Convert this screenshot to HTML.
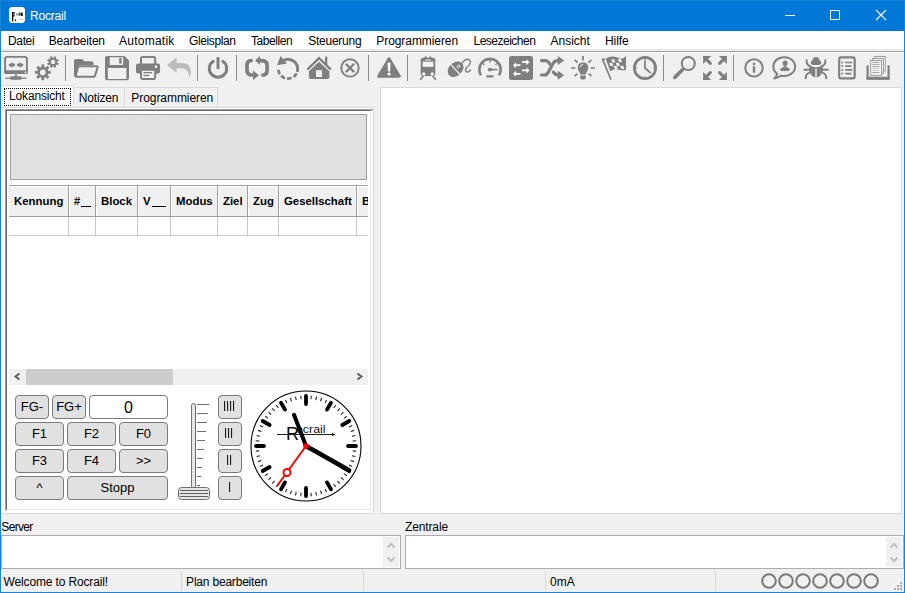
<!DOCTYPE html>
<html><head><meta charset="utf-8">
<style>
*{margin:0;padding:0;box-sizing:border-box}
html,body{width:905px;height:593px;overflow:hidden;background:#f0f0f0;font-family:"Liberation Sans",sans-serif;font-size:12px;color:#000}
.a{position:absolute}
.t{position:absolute;white-space:nowrap;line-height:14px}
#title{left:0;top:0;width:905px;height:31px;background:#0078d7}
#menu{left:1px;top:31px;width:903px;height:18px;background:#fff}
.btn{position:absolute;background:#e1e1e1;border:1px solid #7a7a7a;border-radius:4px;text-align:center;line-height:22px;font-size:13px}
</style></head><body>
<!-- window frame -->
<div class="a" style="left:0;top:0;width:905px;height:593px;background:#1883d7"></div>
<div class="a" style="left:1px;top:1px;width:903px;height:30px;background:#0078d7"></div>
<div class="a" style="left:1px;top:31px;width:903px;height:561px;background:#f0f0f0"></div>
<!-- title -->
<svg class="a" style="left:9px;top:7px" width="16" height="16"><path d="M2 0 H14 L16 2 V14 L14 16 H2 L0 14 V2 Z" fill="#fff"/>
<rect x="3" y="5" width="1.3" height="9.5" fill="#111"/><rect x="3" y="5" width="2.6" height="1.2" fill="#111"/><rect x="4.6" y="5.8" width="1" height="2.8" fill="#333"/><rect x="3.5" y="8.2" width="2" height="1.4" fill="#111"/><rect x="6" y="12.2" width="1" height="2" fill="#222"/>
<rect x="7" y="6.5" width="1.3" height="1.3" fill="#555"/><rect x="8.2" y="8.2" width="1" height="1" fill="#666"/><rect x="9.5" y="5.6" width="2" height="3" fill="#444"/><rect x="11.8" y="5.6" width="2" height="3.4" fill="#111"/><rect x="10" y="11.8" width="4.6" height="0.8" fill="#bbb"/></svg>
<div class="t" style="left:30px;top:9px;color:#fff;letter-spacing:-0.2px">Rocrail</div>
<!-- menu -->
<div class="a" style="left:1px;top:31px;width:903px;height:18px;background:#fff"></div>
<div class="a" style="left:1px;top:49px;width:903px;height:1px;background:#e3e3e3"></div>
<div class="a" style="left:1px;top:51px;width:903px;height:1px;background:#a0a0a0"></div>
<div class="a" style="left:1px;top:52px;width:903px;height:1px;background:#fff"></div>
<div class="t" style="left:8.0px;top:34px;letter-spacing:-0.35px">Datei</div>
<div class="t" style="left:48.8px;top:34px;letter-spacing:-0.20px">Bearbeiten</div>
<div class="t" style="left:119.0px;top:34px;letter-spacing:0.25px">Automatik</div>
<div class="t" style="left:189.0px;top:34px;letter-spacing:-0.38px">Gleisplan</div>
<div class="t" style="left:251.0px;top:34px;letter-spacing:-0.43px">Tabellen</div>
<div class="t" style="left:308.3px;top:34px;letter-spacing:-0.26px">Steuerung</div>
<div class="t" style="left:376.3px;top:34px;letter-spacing:-0.07px">Programmieren</div>
<div class="t" style="left:473.5px;top:34px;letter-spacing:-0.50px">Lesezeichen</div>
<div class="t" style="left:550.6px;top:34px;letter-spacing:-0.03px">Ansicht</div>
<div class="t" style="left:605.0px;top:34px;letter-spacing:-0.07px">Hilfe</div>

<svg class="a" style="left:0;top:52px" width="905" height="34" viewBox="0 52 905 34">
<rect x="5.1" y="56.9" width="21.8" height="15" rx="2" fill="none" stroke="#7f7f7f" stroke-width="1.9"/>
<rect x="4.2" y="70.3" width="23.6" height="3.6" rx="1.2" fill="#7f7f7f"/>
<circle cx="25.4" cy="72.4" r="0.8" fill="#fff"/>
<path d="M8.2 64.9 L12.3 61.9 V63.6 H15 V66.2 H12.3 V67.9 Z" fill="#7f7f7f"/>
<path d="M23.9 64.9 L19.8 61.9 V63.6 H17.1 V66.2 H19.8 V67.9 Z" fill="#7f7f7f"/>
<rect x="15.2" y="73.5" width="1.6" height="3" fill="#7f7f7f"/>
<rect x="5" y="77.4" width="21.8" height="1.4" rx="0.7" fill="#7f7f7f"/>
<rect x="10.1" y="76.3" width="11.6" height="3.5" rx="1.6" fill="#7f7f7f"/>
<circle cx="53" cy="62" r="3.2" fill="none" stroke="#7f7f7f" stroke-width="2.0"/><rect x="51.85" y="56.2" width="2.3" height="2.5999999999999996" fill="#7f7f7f" transform="rotate(22.5 53 62)"/><rect x="51.85" y="56.2" width="2.3" height="2.5999999999999996" fill="#7f7f7f" transform="rotate(67.5 53 62)"/><rect x="51.85" y="56.2" width="2.3" height="2.5999999999999996" fill="#7f7f7f" transform="rotate(112.5 53 62)"/><rect x="51.85" y="56.2" width="2.3" height="2.5999999999999996" fill="#7f7f7f" transform="rotate(157.5 53 62)"/><rect x="51.85" y="56.2" width="2.3" height="2.5999999999999996" fill="#7f7f7f" transform="rotate(202.5 53 62)"/><rect x="51.85" y="56.2" width="2.3" height="2.5999999999999996" fill="#7f7f7f" transform="rotate(247.5 53 62)"/><rect x="51.85" y="56.2" width="2.3" height="2.5999999999999996" fill="#7f7f7f" transform="rotate(292.5 53 62)"/><rect x="51.85" y="56.2" width="2.3" height="2.5999999999999996" fill="#7f7f7f" transform="rotate(337.5 53 62)"/>
<circle cx="42.8" cy="72.3" r="4.25" fill="none" stroke="#7f7f7f" stroke-width="2.6999999999999997"/><rect x="41.4" y="64.39999999999999" width="2.8" height="3.3000000000000007" fill="#7f7f7f" transform="rotate(0.0 42.8 72.3)"/><rect x="41.4" y="64.39999999999999" width="2.8" height="3.3000000000000007" fill="#7f7f7f" transform="rotate(45.0 42.8 72.3)"/><rect x="41.4" y="64.39999999999999" width="2.8" height="3.3000000000000007" fill="#7f7f7f" transform="rotate(90.0 42.8 72.3)"/><rect x="41.4" y="64.39999999999999" width="2.8" height="3.3000000000000007" fill="#7f7f7f" transform="rotate(135.0 42.8 72.3)"/><rect x="41.4" y="64.39999999999999" width="2.8" height="3.3000000000000007" fill="#7f7f7f" transform="rotate(180.0 42.8 72.3)"/><rect x="41.4" y="64.39999999999999" width="2.8" height="3.3000000000000007" fill="#7f7f7f" transform="rotate(225.0 42.8 72.3)"/><rect x="41.4" y="64.39999999999999" width="2.8" height="3.3000000000000007" fill="#7f7f7f" transform="rotate(270.0 42.8 72.3)"/><rect x="41.4" y="64.39999999999999" width="2.8" height="3.3000000000000007" fill="#7f7f7f" transform="rotate(315.0 42.8 72.3)"/>
<rect x="65.0" y="55" width="1" height="26" fill="#8c8c8c"/>
<rect x="197.0" y="55" width="1" height="26" fill="#8c8c8c"/>
<rect x="236.0" y="55" width="1" height="26" fill="#8c8c8c"/>
<rect x="368.0" y="55" width="1" height="26" fill="#8c8c8c"/>
<rect x="407.0" y="55" width="1" height="26" fill="#8c8c8c"/>
<rect x="663.0" y="55" width="1" height="26" fill="#8c8c8c"/>
<rect x="733.0" y="55" width="1" height="26" fill="#8c8c8c"/>
<path d="M74 61 Q74 59 76 59 H81.5 Q83 59 83.8 60.5 L84.3 61.3 H91.5 Q93.5 61.3 93.5 63.3 V65 H80 Q78.3 65 77.8 66.5 L75.8 75.5 H76.5 V77 H76 Q74 77 74 75 Z" fill="#7f7f7f"/>
<path d="M79.4 66.2 H96.6 Q98 66.2 97.6 67.6 L95 75.6 Q94.6 76.8 93.3 76.8 H76.3 Q75.2 76.8 75.6 75.6 L78 67.4 Q78.3 66.2 79.4 66.2 Z" fill="none" stroke="#7f7f7f" stroke-width="2"/>
<path d="M107 56 H124.5 L129 60.5 V78 Q129 80.2 126.8 80.2 H107.2 Q105 80.2 105 78 V58.2 Q105 56 107 56 Z M109.7 57.2 V65 H123.2 V57.2 Z M107.8 67.9 V79 H126.4 V67.9 Z" fill="#7f7f7f" fill-rule="evenodd"/>
<rect x="119.2" y="57.9" width="2.4" height="5.7" fill="#7f7f7f"/>
<rect x="141" y="57" width="14.2" height="8" rx="1.6" fill="none" stroke="#7f7f7f" stroke-width="2"/>
<rect x="136" y="63.6" width="24" height="10" rx="2" fill="#7f7f7f"/>
<circle cx="156" cy="66.8" r="1.2" fill="#fff"/>
<rect x="141" y="69.8" width="14.2" height="9.2" rx="1.4" fill="#f0f0f0" stroke="#7f7f7f" stroke-width="2"/>
<rect x="143.5" y="72" width="8.5" height="1.3" fill="#7f7f7f"/>
<rect x="143.5" y="74.8" width="5.5" height="1.3" fill="#7f7f7f"/>
<path d="M166.9 65.2 L176.6 57.4 V63.1 H182 Q190.9 63.3 190.9 72 Q190.9 75 189.5 77.6 Q188.8 68.3 181 68.2 H176.6 V72.8 Z" fill="#bcbcbc"/>
<path d="M213.2 61.3 A8.7 8.7 0 1 0 222.8 61.3" fill="none" stroke="#7f7f7f" stroke-width="3" stroke-linecap="round"/>
<line x1="218" y1="58.2" x2="218" y2="67.8" stroke="#7f7f7f" stroke-width="3" stroke-linecap="round"/>
<path d="M251.2 60.6 Q247 60.6 247 65.6 V70 Q247 75 252 75 H254" fill="none" stroke="#7f7f7f" stroke-width="3.7" stroke-linecap="round"/>
<path d="M262.8 75 Q267.1 75 267.1 70 V65.6 Q267.1 60.6 262.1 60.6 H259" fill="none" stroke="#7f7f7f" stroke-width="3.7" stroke-linecap="round"/>
<path d="M255.2 60.4 L259.9 55.8 V65.1 Z" fill="#7f7f7f"/>
<path d="M258.9 75.2 L253 70.4 V80.2 Z" fill="#7f7f7f"/>
<path d="M282.91 60.86 A9.6 9.6 0 0 1 297.45 70.67" fill="none" stroke="#7f7f7f" stroke-width="2.9" stroke-linecap="round"/>
<path d="M295.96 74.37 A9.6 9.6 0 0 1 294.42 76.13" fill="none" stroke="#7f7f7f" stroke-width="2.8" stroke-linecap="round"/>
<path d="M290.48 78.27 A9.6 9.6 0 0 1 288.17 78.60" fill="none" stroke="#7f7f7f" stroke-width="2.8" stroke-linecap="round"/>
<path d="M283.94 77.70 A9.6 9.6 0 0 1 281.96 76.46" fill="none" stroke="#7f7f7f" stroke-width="2.8" stroke-linecap="round"/>
<path d="M279.30 73.06 A9.6 9.6 0 0 1 278.58 70.83" fill="none" stroke="#7f7f7f" stroke-width="2.8" stroke-linecap="round"/>
<path d="M280.6 56 L286.9 63.4 L277 65.2 Z" fill="#7f7f7f"/>
<path d="M308 68.9 L319 58.2 L330.2 68.9" fill="none" stroke="#7f7f7f" stroke-width="2.3" stroke-linecap="round"/>
<rect x="325" y="56.6" width="2.3" height="8" rx="0.5" fill="#7f7f7f"/>
<path d="M319 61.8 L329.4 71.2 V77.3 Q329.4 79 327.7 79 H310.6 Q308.9 79 308.9 77.3 V71.2 Z M316 70.2 V77.1 H322 V70.2 Z" fill="#7f7f7f" fill-rule="evenodd"/>
<circle cx="350" cy="67.9" r="8.7" fill="none" stroke="#7f7f7f" stroke-width="1.9"/>
<path d="M345.8 63.7 L354.2 72.1 M354.2 63.7 L345.8 72.1" stroke="#7f7f7f" stroke-width="2.3"/>
<path d="M389 57.2 Q389.8 57.2 390.4 58.2 L400.6 75.6 Q401.6 77.8 399.2 77.8 H378.8 Q376.4 77.8 377.4 75.6 L387.6 58.2 Q388.2 57.2 389 57.2 Z" fill="#7f7f7f"/>
<path d="M387.5 63.4 Q387.5 62.4 389 62.4 Q390.5 62.4 390.5 63.4 L390 71.6 H388 Z" fill="#fff"/>
<circle cx="389" cy="74" r="1.6" fill="#fff"/>
<path d="M423 57.7 H433 Q435.3 57.7 435.3 60 V74 Q435.3 76 433.3 76 H422.7 Q420.7 76 420.7 74 V60 Q420.7 57.7 423 57.7 Z" fill="#7f7f7f"/>
<path d="M424 58.2 L425.6 55.8 L427.2 58.2 Z M428.6 58.2 L430.2 55.8 L431.8 58.2 Z" fill="#7f7f7f"/>
<rect x="422.6" y="61.7" width="10.8" height="5.1" fill="#f4f4f4"/>
<rect x="425" y="59.4" width="6" height="1.3" rx="0.6" fill="#dcdcdc"/>
<circle cx="423.8" cy="73.9" r="1.6" fill="#fff"/><circle cx="432.2" cy="73.9" r="1.6" fill="#fff"/>
<path d="M423 76.4 L420.6 79.3 M433.1 76.4 L435.5 79.3" stroke="#7f7f7f" stroke-width="1.6" stroke-linecap="round"/>
<g transform="rotate(-43 455.6 69.2)"><ellipse cx="455.6" cy="69.2" rx="9" ry="6.6" fill="#7f7f7f"/><line x1="455.2" y1="62.4" x2="455.2" y2="76" stroke="#fff" stroke-width="1.1"/><ellipse cx="459.6" cy="69.2" rx="1.5" ry="1.1" fill="none" stroke="#fff" stroke-width="0.9"/></g>
<path d="M462.6 62.4 Q464.5 59.4 467.3 59.2 Q470.6 59.4 470.3 62.6 Q469.8 64.8 467 67.3 Q464.6 69.6 466 71.6 Q467.6 73.2 470.6 70" fill="none" stroke="#7f7f7f" stroke-width="1.4" stroke-linecap="round"/>
<path d="M481 75.3 A10.7 10.7 0 1 1 499 75.3" fill="none" stroke="#7f7f7f" stroke-width="2.7"/>
<path d="M490 60 V62.6 M483 63.6 L484.6 64.8 M497 63.6 L495.4 64.8" stroke="#7f7f7f" stroke-width="1.4"/>
<circle cx="489.8" cy="69.6" r="1.9" fill="#7f7f7f"/>
<path d="M490 68.6 L497.8 69 V70.2 L490 70.6 Z" fill="#7f7f7f"/>
<rect x="486.2" y="75.3" width="7.5" height="2.3" rx="1.1" fill="#7f7f7f"/>
<rect x="509" y="56" width="24" height="24" rx="2.5" fill="#7f7f7f"/>
<path d="M522 61.300000000000004 H526.5 V59.2 L529.5 62.2 L526.5 65.2 V63.1 H522 Z" fill="#fff"/>
<path d="M520.5 64.3 H516 V62.2 L513 65.2 L516 68.2 V66.10000000000001 H520.5 Z" fill="#fff"/>
<path d="M522 69.5 H526.5 V67.4 L529.5 70.4 L526.5 73.4 V71.30000000000001 H522 Z" fill="#fff"/>
<path d="M520.5 72.89999999999999 H516 V70.8 L513 73.8 L516 76.8 V74.7 H520.5 Z" fill="#fff"/>
<path d="M541.5 60.6 H545.5 Q547.6 60.6 549 62.8 L549.8 64" fill="none" stroke="#7f7f7f" stroke-width="3.2" stroke-linecap="round"/>
<path d="M541.5 75 H544.5 Q546.6 75 548 72.6 L553.2 63.2 Q554.8 60.6 557.5 60.6 H559" fill="none" stroke="#7f7f7f" stroke-width="3.2" stroke-linecap="round"/>
<path d="M553.4 72.2 Q555.2 75.1 558 75.1 H559" fill="none" stroke="#7f7f7f" stroke-width="3.2" stroke-linecap="round"/>
<path d="M557.8 56 L564.2 60.5 L557.8 65 Z" fill="#7f7f7f"/>
<path d="M557.8 70.8 L564.2 75.2 L557.8 79.8 Z" fill="#7f7f7f"/>
<path d="M583 56.1 V60.4 M571.1 68 H575.3 M590.7 68 H594.9 M574.6 59.8 L577.6 62.6 M591.4 59.8 L588.4 62.6 M574.6 76.2 L577.4 73.6 M591.4 76.2 L588.6 73.6" stroke="#7f7f7f" stroke-width="1.7"/>
<path d="M583 62.6 Q588.2 62.6 588.2 67.8 Q588.2 70.4 586.4 72.4 Q585.8 73.2 585.8 74.6 H580.2 Q580.2 73.2 579.6 72.4 Q577.8 70.4 577.8 67.8 Q577.8 62.6 583 62.6 Z" fill="#7f7f7f"/>
<path d="M580.2 75.6 H585.8 V77.4 Q585.8 79.4 583 79.4 Q580.2 79.4 580.2 77.4 Z" fill="#7f7f7f"/>
<path d="M580.4 66.8 Q580.6 64.8 582.8 64.3" fill="none" stroke="#fff" stroke-width="0.9" stroke-linecap="round"/>
<path d="M602.5 59.2 L610.7 79" stroke="#7f7f7f" stroke-width="1.7" stroke-linecap="round"/>
<rect x="602" y="58.6" width="3" height="1.4" fill="#7f7f7f"/>
<path d="M605.6 58.8 Q609 56.4 613 56.6 Q617 57 620 58.4 Q623 59.4 626 56 V69.8 Q623.5 70.8 620 70 Q617 69.2 614 69.4 Q611.5 69.8 610.4 71.4 Z" fill="#7f7f7f"/>
<path d="M611.30 59.30 h3 l1.1 3.2 h-3 Z" fill="#f0f0f0"/>
<path d="M617.90 59.00 h3 l1.1 3.2 h-3 Z" fill="#f0f0f0"/>
<path d="M609.20 62.70 h3 l1.1 3.2 h-3 Z" fill="#f0f0f0"/>
<path d="M615.80 62.70 h3 l1.1 3.2 h-3 Z" fill="#f0f0f0"/>
<path d="M613.70 66.10 h3 l1.1 3.2 h-3 Z" fill="#f0f0f0"/>
<path d="M620.30 65.80 h3 l1.1 3.2 h-3 Z" fill="#f0f0f0"/>
<circle cx="645" cy="68" r="10.6" fill="none" stroke="#7f7f7f" stroke-width="2.7"/>
<path d="M645 60.8 V68 L650.2 72.6" fill="none" stroke="#7f7f7f" stroke-width="1.8" stroke-linecap="round" stroke-linejoin="round"/>
<path d="M645 59 V60 M654 68 H653 M645 77 V76 M636 68 H637" stroke="#7f7f7f" stroke-width="1"/>
<circle cx="688.3" cy="63.5" r="6.5" fill="none" stroke="#7f7f7f" stroke-width="2"/>
<line x1="682.5" y1="69.8" x2="674.8" y2="77.4" stroke="#7f7f7f" stroke-width="3.6" stroke-linecap="round"/>
<path d="M703.1 56.1 H711.1 L703.1 64.1 Z" fill="#7f7f7f"/><line x1="705.1" y1="58.1" x2="710.4" y2="63.4" stroke="#7f7f7f" stroke-width="3" stroke-linecap="round"/>
<path d="M726.9 56.1 H718.9 L726.9 64.1 Z" fill="#7f7f7f"/><line x1="724.9" y1="58.1" x2="719.6" y2="63.4" stroke="#7f7f7f" stroke-width="3" stroke-linecap="round"/>
<path d="M703.1 79.9 H711.1 L703.1 71.9 Z" fill="#7f7f7f"/><line x1="705.1" y1="77.9" x2="710.4" y2="72.60000000000001" stroke="#7f7f7f" stroke-width="3" stroke-linecap="round"/>
<path d="M726.9 79.9 H718.9 L726.9 71.9 Z" fill="#7f7f7f"/><line x1="724.9" y1="77.9" x2="719.6" y2="72.60000000000001" stroke="#7f7f7f" stroke-width="3" stroke-linecap="round"/>
<circle cx="754" cy="67.9" r="8.7" fill="none" stroke="#7f7f7f" stroke-width="2"/>
<circle cx="754" cy="63.9" r="1.3" fill="#7f7f7f"/><rect x="752.8" y="66.2" width="2.4" height="6.6" fill="#7f7f7f"/>
<path d="M777.2 73.8 A10.9 9.4 0 1 1 781 75.6 Q778 77.6 774.2 78.6 Q776.4 76.6 777.2 73.8 Z" fill="none" stroke="#7f7f7f" stroke-width="2" stroke-linejoin="round"/>
<ellipse cx="785.1" cy="63.3" rx="2.5" ry="2.7" fill="#7f7f7f"/><path d="M783.6 66.2 H786.6 L787 67.4 Q789.9 68 789.9 69.6 Q789.9 71 787.5 71 H782.5 Q780.1 71 780.1 69.6 Q780.1 68 783 67.4 Z" fill="#7f7f7f"/>
<path d="M816 57 Q818.8 57 819.5 60 Q821.3 61.2 821.3 63.2 Q821.3 65.1 816 65.1 Q810.7 65.1 810.7 63.2 Q810.7 61.2 812.5 60 Q813.2 57 816 57 Z" fill="#7f7f7f"/>
<path d="M809.2 65.6 Q816 69 822.8 65.6 Q823.3 72.5 820.2 75.5 Q818.4 77.3 816 77.9 Q813.6 77.3 811.8 75.5 Q808.7 72.5 809.2 65.6 Z" fill="#7f7f7f"/>
<line x1="816" y1="68.6" x2="816" y2="78" stroke="#f0f0f0" stroke-width="1.4"/>
<path d="M806.6 60.3 Q806.4 65.4 810.6 66.4 M825.4 60.3 Q825.6 65.4 821.4 66.4 M804.3 69.8 H810 M827.9 69.8 H822 M805.6 78.4 Q805.8 73.6 810.2 72.4 M826.4 78.4 Q826.2 73.6 821.8 72.4" fill="none" stroke="#7f7f7f" stroke-width="1.9" stroke-linecap="round"/>
<rect x="839.2" y="57.4" width="15.5" height="21" rx="1.8" fill="none" stroke="#7f7f7f" stroke-width="2.2"/>
<circle cx="842.4" cy="62.5" r="1" fill="#7f7f7f"/><rect x="845.1" y="61.7" width="7.2999999999999545" height="1.6" rx="0.6" fill="#7f7f7f"/>
<circle cx="842.4" cy="66.1" r="1" fill="#7f7f7f"/><rect x="845.1" y="65.3" width="6.2999999999999545" height="1.6" rx="0.6" fill="#7f7f7f"/>
<circle cx="842.4" cy="69.9" r="1" fill="#7f7f7f"/><rect x="845.1" y="69.10000000000001" width="7.2999999999999545" height="1.6" rx="0.6" fill="#7f7f7f"/>
<circle cx="842.4" cy="73.6" r="1" fill="#7f7f7f"/><rect x="845.1" y="72.8" width="6.2999999999999545" height="1.6" rx="0.6" fill="#7f7f7f"/>
<path d="M867.6 66.3 V78.4 H888.6 V66.3" fill="none" stroke="#7f7f7f" stroke-width="2.2" stroke-linecap="round"/>
<rect x="866.5" y="76.8" width="23.2" height="3" rx="0.8" fill="#7f7f7f"/>
<rect x="874.6999999999999" y="56.4" width="10.500000000000068" height="14.600000000000005" fill="#f7f7f7" stroke="#8f8f8f" stroke-width="0.9"/>
<rect x="872.6999999999999" y="58.5" width="10.7" height="14.599999999999998" fill="#f7f7f7" stroke="#8f8f8f" stroke-width="0.9"/>
<rect x="870.6999999999999" y="60.5" width="10.800000000000022" height="14.8" fill="#f7f7f7" stroke="#8f8f8f" stroke-width="0.9"/>
<rect x="872.2" y="61.949999999999996" width="7.4" height="0.9" fill="#9a9a9a"/>
<rect x="872.2" y="63.95" width="7.4" height="0.9" fill="#9a9a9a"/>
<rect x="872.2" y="66.05" width="7.4" height="0.9" fill="#9a9a9a"/>
<rect x="872.2" y="67.95" width="7.4" height="0.9" fill="#c4c4c4"/>
<rect x="872.2" y="70.14999999999999" width="7.4" height="0.9" fill="#c4c4c4"/>
<rect x="872.2" y="72.14999999999999" width="7.4" height="0.9" fill="#9a9a9a"/>
</svg>

<!-- right white panel -->
<div class="a" style="left:380px;top:87px;width:522px;height:427px;background:#fff;border:1px solid #d9d9d9"></div>

<!-- tabs -->
<div class="a" style="left:1px;top:85px;width:73px;height:23px;background:#fff;border:1px solid #d9d9d9;border-left-color:#f4f4f4;border-bottom:none"></div>
<div class="a" style="left:4px;top:88px;width:67px;height:18px;border:1px dotted #000"></div>
<div class="t" style="left:9.1px;top:89px;letter-spacing:-0.17px">Lokansicht</div>
<div class="a" style="left:73px;top:87px;width:52px;height:20px;background:#f0f0f0;border:1px solid #d9d9d9;border-bottom:none"></div>
<div class="t" style="left:78.8px;top:91px;letter-spacing:-0.18px">Notizen</div>
<div class="a" style="left:125px;top:87px;width:93px;height:20px;background:#f0f0f0;border:1px solid #d9d9d9;border-bottom:none;border-left:none"></div>
<div class="t" style="left:131.3px;top:91px;letter-spacing:-0.06px">Programmieren</div>

<!-- notebook page -->
<div class="a" style="left:1px;top:107px;width:373px;height:407px;background:#fff;border:1px solid #d9d9d9;border-left-color:#f8f8f8"></div>

<!-- notebook page inner 3D panel -->
<div class="a" style="left:5px;top:109px;width:368px;height:402px;border-top:2px solid #a0a0a0;border-left:2px solid #a0a0a0;border-right:1px solid #fff;border-bottom:1px solid #fff"></div>
<div class="a" style="left:6px;top:110px;width:365px;height:400px;border-top:1px solid #696969;border-left:1px solid #696969;border-right:1px solid #e3e3e3;border-bottom:1px solid #e3e3e3;background:#fff"></div>
<!-- gray image box -->
<div class="a" style="left:10px;top:114px;width:357px;height:66px;background:#e0e0e0;border:1px solid #a0a0a0;border-right-color:#a0a0a0"></div>
<!-- table -->
<div class="a" style="left:9px;top:185px;width:359px;height:51px;overflow:hidden">
<div class="a" style="left:0;top:0;width:359px;height:1px;background:#a0a0a0"></div>
<div class="a" style="left:0;top:1px;width:359px;height:30px;background:#f0f0f0;border-top:1px solid #fff"></div>
<div class="a" style="left:0;top:31px;width:359px;height:1px;background:#a0a0a0"></div>
<div class="a" style="left:0;top:50px;width:359px;height:1px;background:#c8c8c8"></div>
<div class="t" style="left:5px;top:9px;font-weight:bold;font-size:11.4px">Kennung</div>
<div class="a" style="left:59px;top:1px;width:1px;height:30px;background:#a0a0a0"></div>
<div class="a" style="left:60px;top:1px;width:1px;height:30px;background:#fff"></div>
<div class="a" style="left:59px;top:32px;width:1px;height:18px;background:#c8c8c8"></div>
<div class="t" style="left:65px;top:9px;font-weight:bold;font-size:11px">#</div><div class="a" style="left:72px;top:21px;width:10px;height:1.3px;background:#000"></div>
<div class="a" style="left:86px;top:1px;width:1px;height:30px;background:#a0a0a0"></div>
<div class="a" style="left:87px;top:1px;width:1px;height:30px;background:#fff"></div>
<div class="a" style="left:86px;top:32px;width:1px;height:18px;background:#c8c8c8"></div>
<div class="t" style="left:92px;top:9px;font-weight:bold;font-size:11.4px">Block</div>
<div class="a" style="left:128px;top:1px;width:1px;height:30px;background:#a0a0a0"></div>
<div class="a" style="left:129px;top:1px;width:1px;height:30px;background:#fff"></div>
<div class="a" style="left:128px;top:32px;width:1px;height:18px;background:#c8c8c8"></div>
<div class="t" style="left:134px;top:9px;font-weight:bold;font-size:11.4px">V</div><div class="a" style="left:143px;top:21px;width:14px;height:1.3px;background:#000"></div>
<div class="a" style="left:161px;top:1px;width:1px;height:30px;background:#a0a0a0"></div>
<div class="a" style="left:162px;top:1px;width:1px;height:30px;background:#fff"></div>
<div class="a" style="left:161px;top:32px;width:1px;height:18px;background:#c8c8c8"></div>
<div class="t" style="left:167px;top:9px;font-weight:bold;font-size:11.4px">Modus</div>
<div class="a" style="left:208px;top:1px;width:1px;height:30px;background:#a0a0a0"></div>
<div class="a" style="left:209px;top:1px;width:1px;height:30px;background:#fff"></div>
<div class="a" style="left:208px;top:32px;width:1px;height:18px;background:#c8c8c8"></div>
<div class="t" style="left:214px;top:9px;font-weight:bold;font-size:11.4px">Ziel</div>
<div class="a" style="left:238px;top:1px;width:1px;height:30px;background:#a0a0a0"></div>
<div class="a" style="left:239px;top:1px;width:1px;height:30px;background:#fff"></div>
<div class="a" style="left:238px;top:32px;width:1px;height:18px;background:#c8c8c8"></div>
<div class="t" style="left:244px;top:9px;font-weight:bold;font-size:11.4px">Zug</div>
<div class="a" style="left:269px;top:1px;width:1px;height:30px;background:#a0a0a0"></div>
<div class="a" style="left:270px;top:1px;width:1px;height:30px;background:#fff"></div>
<div class="a" style="left:269px;top:32px;width:1px;height:18px;background:#c8c8c8"></div>
<div class="t" style="left:275px;top:9px;font-weight:bold;font-size:11.4px">Gesellschaft</div>
<div class="a" style="left:347px;top:1px;width:1px;height:30px;background:#a0a0a0"></div>
<div class="a" style="left:348px;top:1px;width:1px;height:30px;background:#fff"></div>
<div class="a" style="left:347px;top:32px;width:1px;height:18px;background:#c8c8c8"></div>
<div class="t" style="left:353px;top:9px;font-weight:bold;font-size:11.4px">B</div>
</div>

<!-- hscrollbar -->
<div class="a" style="left:9px;top:369px;width:359px;height:16px;background:#f0f0f0"></div>
<div class="a" style="left:26px;top:369px;width:147px;height:16px;background:#cdcdcd"></div>
<svg class="a" style="left:9px;top:369px" width="359" height="16"><path d="M10.5 4.5 L6.5 7.5 L10.5 10.5" fill="none" stroke="#606060" stroke-width="2"/><path d="M348.5 4.5 L352.5 7.5 L348.5 10.5" fill="none" stroke="#606060" stroke-width="2"/></svg>
<!-- buttons -->
<div class="btn" style="left:15px;top:395px;width:34px;height:24px;font-size:13px">FG-</div>
<div class="btn" style="left:52px;top:395px;width:34px;height:24px;font-size:13px">FG+</div>
<div class="btn" style="left:89px;top:395px;width:79px;height:24px;background:#fff;font-size:16px;line-height:24px">0</div>
<div class="btn" style="left:15px;top:422px;width:49px;height:24px;font-size:13px">F1</div>
<div class="btn" style="left:67px;top:422px;width:49px;height:24px;font-size:13px">F2</div>
<div class="btn" style="left:119px;top:422px;width:49px;height:24px;font-size:13px">F0</div>
<div class="btn" style="left:15px;top:449px;width:49px;height:24px;font-size:13px">F3</div>
<div class="btn" style="left:67px;top:449px;width:49px;height:24px;font-size:13px">F4</div>
<div class="btn" style="left:119px;top:449px;width:49px;height:24px;font-size:13px">&gt;&gt;</div>
<div class="btn" style="left:15px;top:476px;width:49px;height:24px;font-size:13px">^</div>
<div class="btn" style="left:67px;top:476px;width:101px;height:24px;font-size:13px">Stopp</div>
<div class="btn" style="left:218px;top:395px;width:24px;height:24px"></div>
<div class="btn" style="left:218px;top:422px;width:24px;height:24px"></div>
<div class="btn" style="left:218px;top:449px;width:24px;height:24px"></div>
<div class="btn" style="left:218px;top:476px;width:24px;height:24px"></div>
<svg class="a" style="left:218px;top:395px" width="24" height="105"><rect x="6" y="6" width="1.1" height="10" fill="#1a1a1a"/><rect x="9" y="6" width="1.1" height="10" fill="#1a1a1a"/><rect x="12" y="6" width="1.1" height="10" fill="#1a1a1a"/><rect x="15" y="6" width="1.1" height="10" fill="#1a1a1a"/><rect x="7" y="33" width="1.1" height="10" fill="#1a1a1a"/><rect x="10" y="33" width="1.1" height="10" fill="#1a1a1a"/><rect x="13" y="33" width="1.1" height="10" fill="#1a1a1a"/><rect x="9" y="60" width="1.1" height="10" fill="#1a1a1a"/><rect x="12" y="60" width="1.1" height="10" fill="#1a1a1a"/><rect x="11" y="87" width="1.1" height="10" fill="#1a1a1a"/></svg>
<!-- slider -->
<svg class="a" style="left:170px;top:390px" width="45" height="115">
<rect x="21.5" y="13.5" width="4" height="85" rx="2" fill="#e6e6e6" stroke="#707070" stroke-width="1"/>
<line x1="27" y1="14.5" x2="39.0" y2="14.5" stroke="#707070" stroke-width="1"/>
<line x1="27" y1="23.5" x2="38.0" y2="23.5" stroke="#707070" stroke-width="1"/>
<line x1="27" y1="32.5" x2="37.0" y2="32.5" stroke="#707070" stroke-width="1"/>
<line x1="27" y1="41.5" x2="36.0" y2="41.5" stroke="#707070" stroke-width="1"/>
<line x1="27" y1="50.5" x2="35.0" y2="50.5" stroke="#707070" stroke-width="1"/>
<line x1="27" y1="59.5" x2="34.0" y2="59.5" stroke="#707070" stroke-width="1"/>
<line x1="27" y1="68.5" x2="33.0" y2="68.5" stroke="#707070" stroke-width="1"/>
<line x1="27" y1="77.5" x2="32.0" y2="77.5" stroke="#707070" stroke-width="1"/>
<line x1="27" y1="86.5" x2="31.0" y2="86.5" stroke="#707070" stroke-width="1"/>
<line x1="27" y1="95.5" x2="30.0" y2="95.5" stroke="#707070" stroke-width="1"/>
<rect x="8.5" y="97.5" width="31" height="12" rx="3" fill="#e6e6e6" stroke="#707070"/>
<line x1="10.2" y1="100.5" x2="37.8" y2="100.5" stroke="#606060" stroke-width="1" stroke-linecap="round"/>
<line x1="10.2" y1="103.5" x2="37.8" y2="103.5" stroke="#606060" stroke-width="1" stroke-linecap="round"/>
<line x1="10.2" y1="106.5" x2="37.8" y2="106.5" stroke="#606060" stroke-width="1" stroke-linecap="round"/>
</svg>
<svg class="a" style="left:245px;top:385px" width="125" height="125" viewBox="245 385 125 125">
<circle cx="306" cy="446" r="55" fill="#fff" stroke="#000" stroke-width="1.1"/>
<line x1="306.00" y1="404.00" x2="306.00" y2="396.00" stroke="#000" stroke-width="3.8" stroke-linecap="round"/>
<line x1="310.91" y1="399.26" x2="311.28" y2="395.78" stroke="#222" stroke-width="1.1" stroke-linecap="butt"/>
<line x1="315.77" y1="400.03" x2="316.50" y2="396.60" stroke="#222" stroke-width="1.1" stroke-linecap="butt"/>
<line x1="320.52" y1="401.30" x2="321.61" y2="397.97" stroke="#222" stroke-width="1.1" stroke-linecap="butt"/>
<line x1="325.12" y1="403.06" x2="326.54" y2="399.87" stroke="#222" stroke-width="1.1" stroke-linecap="butt"/>
<line x1="327.00" y1="409.63" x2="331.00" y2="402.70" stroke="#000" stroke-width="3.8" stroke-linecap="round"/>
<line x1="333.63" y1="407.98" x2="335.68" y2="405.14" stroke="#222" stroke-width="1.1" stroke-linecap="butt"/>
<line x1="337.45" y1="411.07" x2="339.79" y2="408.47" stroke="#222" stroke-width="1.1" stroke-linecap="butt"/>
<line x1="340.93" y1="414.55" x2="343.53" y2="412.21" stroke="#222" stroke-width="1.1" stroke-linecap="butt"/>
<line x1="344.02" y1="418.37" x2="346.86" y2="416.32" stroke="#222" stroke-width="1.1" stroke-linecap="butt"/>
<line x1="342.37" y1="425.00" x2="349.30" y2="421.00" stroke="#000" stroke-width="3.8" stroke-linecap="round"/>
<line x1="348.94" y1="426.88" x2="352.13" y2="425.46" stroke="#222" stroke-width="1.1" stroke-linecap="butt"/>
<line x1="350.70" y1="431.48" x2="354.03" y2="430.39" stroke="#222" stroke-width="1.1" stroke-linecap="butt"/>
<line x1="351.97" y1="436.23" x2="355.40" y2="435.50" stroke="#222" stroke-width="1.1" stroke-linecap="butt"/>
<line x1="352.74" y1="441.09" x2="356.22" y2="440.72" stroke="#222" stroke-width="1.1" stroke-linecap="butt"/>
<line x1="348.00" y1="446.00" x2="356.00" y2="446.00" stroke="#000" stroke-width="3.8" stroke-linecap="round"/>
<line x1="352.74" y1="450.91" x2="356.22" y2="451.28" stroke="#222" stroke-width="1.1" stroke-linecap="butt"/>
<line x1="351.97" y1="455.77" x2="355.40" y2="456.50" stroke="#222" stroke-width="1.1" stroke-linecap="butt"/>
<line x1="350.70" y1="460.52" x2="354.03" y2="461.61" stroke="#222" stroke-width="1.1" stroke-linecap="butt"/>
<line x1="348.94" y1="465.12" x2="352.13" y2="466.54" stroke="#222" stroke-width="1.1" stroke-linecap="butt"/>
<line x1="342.37" y1="467.00" x2="349.30" y2="471.00" stroke="#000" stroke-width="3.8" stroke-linecap="round"/>
<line x1="344.02" y1="473.63" x2="346.86" y2="475.68" stroke="#222" stroke-width="1.1" stroke-linecap="butt"/>
<line x1="340.93" y1="477.45" x2="343.53" y2="479.79" stroke="#222" stroke-width="1.1" stroke-linecap="butt"/>
<line x1="337.45" y1="480.93" x2="339.79" y2="483.53" stroke="#222" stroke-width="1.1" stroke-linecap="butt"/>
<line x1="333.63" y1="484.02" x2="335.68" y2="486.86" stroke="#222" stroke-width="1.1" stroke-linecap="butt"/>
<line x1="327.00" y1="482.37" x2="331.00" y2="489.30" stroke="#000" stroke-width="3.8" stroke-linecap="round"/>
<line x1="325.12" y1="488.94" x2="326.54" y2="492.13" stroke="#222" stroke-width="1.1" stroke-linecap="butt"/>
<line x1="320.52" y1="490.70" x2="321.61" y2="494.03" stroke="#222" stroke-width="1.1" stroke-linecap="butt"/>
<line x1="315.77" y1="491.97" x2="316.50" y2="495.40" stroke="#222" stroke-width="1.1" stroke-linecap="butt"/>
<line x1="310.91" y1="492.74" x2="311.28" y2="496.22" stroke="#222" stroke-width="1.1" stroke-linecap="butt"/>
<line x1="306.00" y1="488.00" x2="306.00" y2="496.00" stroke="#000" stroke-width="3.8" stroke-linecap="round"/>
<line x1="301.09" y1="492.74" x2="300.72" y2="496.22" stroke="#222" stroke-width="1.1" stroke-linecap="butt"/>
<line x1="296.23" y1="491.97" x2="295.50" y2="495.40" stroke="#222" stroke-width="1.1" stroke-linecap="butt"/>
<line x1="291.48" y1="490.70" x2="290.39" y2="494.03" stroke="#222" stroke-width="1.1" stroke-linecap="butt"/>
<line x1="286.88" y1="488.94" x2="285.46" y2="492.13" stroke="#222" stroke-width="1.1" stroke-linecap="butt"/>
<line x1="285.00" y1="482.37" x2="281.00" y2="489.30" stroke="#000" stroke-width="3.8" stroke-linecap="round"/>
<line x1="278.37" y1="484.02" x2="276.32" y2="486.86" stroke="#222" stroke-width="1.1" stroke-linecap="butt"/>
<line x1="274.55" y1="480.93" x2="272.21" y2="483.53" stroke="#222" stroke-width="1.1" stroke-linecap="butt"/>
<line x1="271.07" y1="477.45" x2="268.47" y2="479.79" stroke="#222" stroke-width="1.1" stroke-linecap="butt"/>
<line x1="267.98" y1="473.63" x2="265.14" y2="475.68" stroke="#222" stroke-width="1.1" stroke-linecap="butt"/>
<line x1="269.63" y1="467.00" x2="262.70" y2="471.00" stroke="#000" stroke-width="3.8" stroke-linecap="round"/>
<line x1="263.06" y1="465.12" x2="259.87" y2="466.54" stroke="#222" stroke-width="1.1" stroke-linecap="butt"/>
<line x1="261.30" y1="460.52" x2="257.97" y2="461.61" stroke="#222" stroke-width="1.1" stroke-linecap="butt"/>
<line x1="260.03" y1="455.77" x2="256.60" y2="456.50" stroke="#222" stroke-width="1.1" stroke-linecap="butt"/>
<line x1="259.26" y1="450.91" x2="255.78" y2="451.28" stroke="#222" stroke-width="1.1" stroke-linecap="butt"/>
<line x1="264.00" y1="446.00" x2="256.00" y2="446.00" stroke="#000" stroke-width="3.8" stroke-linecap="round"/>
<line x1="259.26" y1="441.09" x2="255.78" y2="440.72" stroke="#222" stroke-width="1.1" stroke-linecap="butt"/>
<line x1="260.03" y1="436.23" x2="256.60" y2="435.50" stroke="#222" stroke-width="1.1" stroke-linecap="butt"/>
<line x1="261.30" y1="431.48" x2="257.97" y2="430.39" stroke="#222" stroke-width="1.1" stroke-linecap="butt"/>
<line x1="263.06" y1="426.88" x2="259.87" y2="425.46" stroke="#222" stroke-width="1.1" stroke-linecap="butt"/>
<line x1="269.63" y1="425.00" x2="262.70" y2="421.00" stroke="#000" stroke-width="3.8" stroke-linecap="round"/>
<line x1="267.98" y1="418.37" x2="265.14" y2="416.32" stroke="#222" stroke-width="1.1" stroke-linecap="butt"/>
<line x1="271.07" y1="414.55" x2="268.47" y2="412.21" stroke="#222" stroke-width="1.1" stroke-linecap="butt"/>
<line x1="274.55" y1="411.07" x2="272.21" y2="408.47" stroke="#222" stroke-width="1.1" stroke-linecap="butt"/>
<line x1="278.37" y1="407.98" x2="276.32" y2="405.14" stroke="#222" stroke-width="1.1" stroke-linecap="butt"/>
<line x1="285.00" y1="409.63" x2="281.00" y2="402.70" stroke="#000" stroke-width="3.8" stroke-linecap="round"/>
<line x1="286.88" y1="403.06" x2="285.46" y2="399.87" stroke="#222" stroke-width="1.1" stroke-linecap="butt"/>
<line x1="291.48" y1="401.30" x2="290.39" y2="397.97" stroke="#222" stroke-width="1.1" stroke-linecap="butt"/>
<line x1="296.23" y1="400.03" x2="295.50" y2="396.60" stroke="#222" stroke-width="1.1" stroke-linecap="butt"/>
<line x1="301.09" y1="399.26" x2="300.72" y2="395.78" stroke="#222" stroke-width="1.1" stroke-linecap="butt"/>
<line x1="277" y1="434.5" x2="333" y2="434.5" stroke="#222" stroke-width="1"/>
<path d="M332 432.8 L335.5 434.5 L332 436.2 Z" fill="#222"/>
<g transform="rotate(0.01 300 430)"><text x="286" y="440.4" font-family="Liberation Sans" font-size="18" fill="#111">R</text>
<text x="296" y="433" font-family="Liberation Sans" font-size="11.5" fill="#111" textLength="29.5" lengthAdjust="spacingAndGlyphs">ocrail</text></g>
<line x1="306" y1="446" x2="294" y2="414.8" stroke="#000" stroke-width="4" stroke-linecap="round"/>
<line x1="306" y1="446" x2="349" y2="470.3" stroke="#000" stroke-width="4.6" stroke-linecap="round"/>
<line x1="306" y1="446" x2="277" y2="486" stroke="#f00" stroke-width="2"/>
<circle cx="287" cy="472.5" r="3.5" fill="#fff" stroke="#f00" stroke-width="2"/>
<circle cx="306" cy="446" r="2.8" fill="#f00"/>
</svg>

<!-- bottom -->
<div class="t" style="left:1.3px;top:520px;letter-spacing:-0.66px">Server</div>
<div class="t" style="left:405.0px;top:520px;letter-spacing:-0.13px">Zentrale</div>
<div class="a" style="left:1px;top:535px;width:400px;height:34px;background:#fff;border:1px solid #abadb3"></div>
<div class="a" style="left:383px;top:537px;width:16px;height:30px;background:#f0f0f0"></div>
<div class="a" style="left:405px;top:535px;width:499px;height:34px;background:#fff;border:1px solid #abadb3"></div>
<div class="a" style="left:886px;top:537px;width:16px;height:30px;background:#f0f0f0"></div>
<svg class="a" style="left:383px;top:537px" width="16" height="30"><path d="M4.5 10.5 L8 7 L11.5 10.5" fill="none" stroke="#c0c0c0" stroke-width="2"/><path d="M4.5 20.5 L8 24 L11.5 20.5" fill="none" stroke="#c0c0c0" stroke-width="2"/></svg>
<svg class="a" style="left:886px;top:537px" width="16" height="30"><path d="M4.5 10.5 L8 7 L11.5 10.5" fill="none" stroke="#c0c0c0" stroke-width="2"/><path d="M4.5 20.5 L8 24 L11.5 20.5" fill="none" stroke="#c0c0c0" stroke-width="2"/></svg>
<!-- status bar -->
<div class="t" style="left:3.5px;top:575px;letter-spacing:-0.14px">Welcome to Rocrail!</div>
<div class="a" style="left:181px;top:571px;width:1px;height:20px;background:#d7d7d7"></div>
<div class="t" style="left:186.1px;top:575px;letter-spacing:-0.20px">Plan bearbeiten</div>
<div class="a" style="left:363px;top:571px;width:1px;height:20px;background:#d7d7d7"></div>
<div class="a" style="left:545px;top:571px;width:1px;height:20px;background:#d7d7d7"></div>
<div class="t" style="left:549.9px;top:575px;letter-spacing:0.10px">0mA</div>
<div class="a" style="left:715px;top:571px;width:1px;height:20px;background:#d7d7d7"></div>
<svg class="a" style="left:755px;top:570px" width="150" height="22">
<circle cx="14" cy="11" r="6.8" fill="none" stroke="#7a7a7a" stroke-width="2"/>
<circle cx="31" cy="11" r="6.8" fill="none" stroke="#7a7a7a" stroke-width="2"/>
<circle cx="48" cy="11" r="6.8" fill="none" stroke="#7a7a7a" stroke-width="2"/>
<circle cx="65" cy="11" r="6.8" fill="none" stroke="#7a7a7a" stroke-width="2"/>
<circle cx="82" cy="11" r="6.8" fill="none" stroke="#7a7a7a" stroke-width="2"/>
<circle cx="99" cy="11" r="6.8" fill="none" stroke="#7a7a7a" stroke-width="2"/>
<rect x="145" y="12" width="2" height="2" fill="#aaaaaa"/><rect x="142" y="15" width="2" height="2" fill="#aaaaaa"/><rect x="145" y="15" width="2" height="2" fill="#aaaaaa"/><rect x="139" y="18" width="2" height="2" fill="#aaaaaa"/><rect x="142" y="18" width="2" height="2" fill="#aaaaaa"/><rect x="145" y="18" width="2" height="2" fill="#aaaaaa"/>
<circle cx="116" cy="11" r="6.8" fill="none" stroke="#7a7a7a" stroke-width="2"/>
</svg>

<!-- window controls -->
<svg class="a" style="left:760px;top:0" width="145" height="31">
<line x1="25" y1="15.5" x2="35" y2="15.5" stroke="#fff" stroke-width="1"/>
<rect x="70.5" y="10.5" width="9" height="9" fill="none" stroke="#fff" stroke-width="1"/>
<path d="M116 10 L126 20 M126 10 L116 20" stroke="#fff" stroke-width="1.1"/>
</svg>
</body></html>
